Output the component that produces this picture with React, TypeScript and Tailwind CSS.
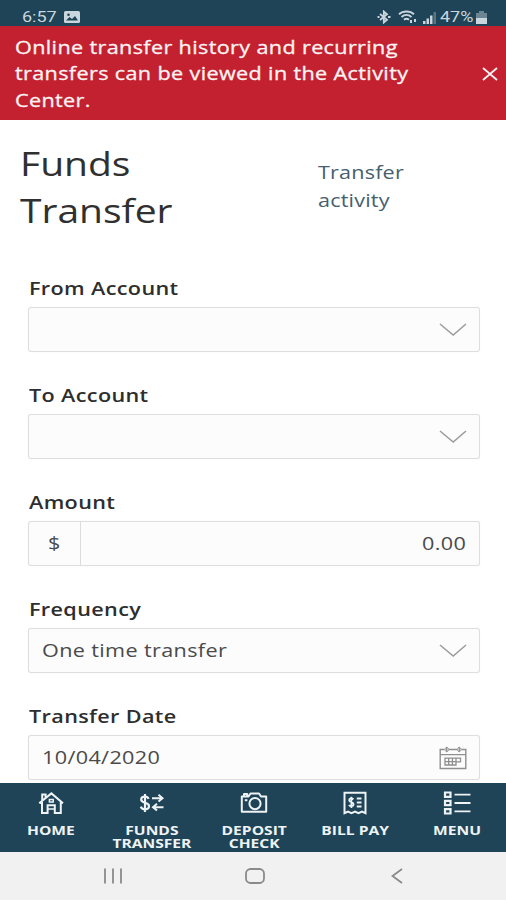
// Dependencies.
import type { ReactNode } from "react"

// Icons.
function Chevron() {
	return (
		<svg className="h-4 w-7" viewBox="0 0 28 16" fill="none" stroke="#9b9b9b" strokeWidth="1.5">
			<path d="M1 2 14.2 13 27 2" />
		</svg>
	)
}

function CalendarIcon() {
	return (
		<svg className="h-6 w-7" viewBox="0 0 28 24" fill="none" stroke="#8f8f8f" strokeWidth="1.4">
			<path d="M5.5 3.5H1.2V22.5H26.8V3.5H22.5M10 3.5H18M1.2 8.6H26.8" />
			<path d="M7.8 1.2V5.8M20.2 1.2V5.8" strokeWidth="1.4" />
			<path d="M7.8 1.2C5.4 2 5.4 5 7.8 5.8 10.2 5 10.2 2 7.8 1.2ZM20.2 1.2C17.8 2 17.8 5 20.2 5.8 22.6 5 22.6 2 20.2 1.2Z" strokeWidth="1" />
			<path d="M6 12.2H21.5V15.8H17V19H6ZM6 15.6H17M9.7 12.2V19M13.4 12.2V19M17 12.2V15.8" strokeWidth="1.3" />
		</svg>
	)
}

function HomeIcon() {
	return (
		<svg className="h-6 w-7" viewBox="0 0 28 24" fill="none" stroke="#eef3f5" strokeWidth="2">
			<path d="M2.2 12.2 14.4 2.4 26 12.2M5 11V22H10.6V14.2H17.8V22H23.8V11M5.2 9.5V3.4H8.6V6.5" />
			<path d="M12.4 8.6H16.2V11H12.4ZM10.6 18H17.8" strokeWidth="1.5" />
		</svg>
	)
}

function TransferIcon() {
	return (
		<svg className="h-6 w-7" viewBox="0 0 28 24" fill="none" stroke="#eef3f5" strokeWidth="2.2">
			<path d="M10.6 7.8C10 6.2 8.6 5.5 7 5.5 4.6 5.5 3.2 6.7 3.2 8.6 3.2 13 11 10.6 11 15 11 17 9.4 18.3 7 18.3 4.8 18.3 3.4 17.4 2.8 15.6M7 3V21" />
			<path d="M14 7.2H24.5M20.5 3.8 24.5 7.2 20.5 10.6M25.5 16.2H15M19 12.8 15 16.2 19 19.6" strokeWidth="2" />
		</svg>
	)
}

function CameraIcon() {
	return (
		<svg className="h-6 w-7" viewBox="0 0 28 24" fill="none" stroke="#eef3f5" strokeWidth="2" strokeLinejoin="round">
			<path d="M1.8 5.5H8.5L10.5 2.5H19L21 5.5H26.2V20.8H1.8ZM4 5V3H7.2V5" />
			<circle cx="15" cy="12.6" r="5.6" />
			<path d="M4.8 9.2H7.4" />
		</svg>
	)
}

function BillIcon() {
	return (
		<svg className="h-6 w-7" viewBox="0 0 28 24" fill="none" stroke="#eef3f5" strokeWidth="2">
			<path d="M3.5 22.2V1.7H24.5V22.2L21 20.5 17.5 22.2 14 20.5 10.5 22.2 7 20.5Z" />
			<path d="M12.5 8.3C10.5 6.6 8 7.4 8.2 9.3 8.4 11.5 12.6 10.8 12.6 13.2 12.6 15.4 9.6 15.8 7.8 14.2M10.4 5.8V17" strokeWidth="1.8" />
			<path d="M15.8 7.5H20.5M15.8 11.5H20.5M15.8 15.5H20.5" />
		</svg>
	)
}

function MenuIcon() {
	return (
		<svg className="h-6 w-7" viewBox="0 0 28 24" fill="none" stroke="#eef3f5" strokeWidth="2.2">
			<path d="M2 1.5H7.5V5.9H2ZM2 9.8H7.5V14.2H2ZM2 18.1H7.5V22.5H2Z" />
			<path d="M11.5 3.7H27.5M11.5 12H27.5M11.5 20.3H27.5" strokeWidth="1.8" />
		</svg>
	)
}

// Wide text, stretched from its left edge.
function Wide({ children }: { children: ReactNode }) {
	return <span className="inline-block origin-left scale-x-[1.2] whitespace-nowrap">{children}</span>
}

function Field({ label, children }: { label: string; children: ReactNode }) {
	return (
		<div className="h-[107px]">
			<div className="h-[33px] pl-[0.5px] text-[18px] leading-7 font-semibold text-[#2e2e2e]">
				<Wide>{label}</Wide>
			</div>
			<div className="flex h-[45px] items-center rounded-[3px] border-[1.5px] border-[#dedede] bg-[#fcfcfc] pr-3 text-[18px] text-[#4a4a4a] shadow-[0_0_1px_#e4e4e4]">
				{children}
			</div>
		</div>
	)
}

const tabs = [
	{ lines: ["HOME"], icon: <HomeIcon /> },
	{ lines: ["FUNDS", "TRANSFER"], icon: <TransferIcon /> },
	{ lines: ["DEPOSIT", "CHECK"], icon: <CameraIcon /> },
	{ lines: ["BILL PAY"], icon: <BillIcon /> },
	{ lines: ["MENU"], icon: <MenuIcon /> },
]

// Component.
export default function App() {
	return (
		<div className="flex h-[900px] w-[506px] flex-col overflow-hidden bg-white font-['Open_Sans',sans-serif] tracking-[0.3px]">
			<header className="flex h-[26px] shrink-0 items-center bg-[#1f4357] pt-2 pr-[19px] pl-[22px] font-[Roboto,sans-serif] text-[15px] tracking-normal text-[#c9d6dd]">
				<span className="w-[42px]">
					<Wide>6:57</Wide>
				</span>
				<svg className="h-3 w-4" viewBox="0 0 16 12">
					<rect width="16" height="12" rx="1.5" fill="#c9d6dd" />
					<path d="M2 9.5 5.5 6 8 8 11 5 14 9.5Z" fill="#1f4357" />
					<circle cx="4.5" cy="3.8" r="1.3" fill="#1f4357" />
				</svg>
				<svg className="ml-auto h-[14px] w-4" viewBox="0 0 16 14" fill="none" stroke="#c9d6dd" strokeWidth="1.8">
					<path d="M4 4 11 9.8 7.8 12.5V1.5L11 4.2 4 10" />
					<path d="M1.5 7H3.5M12 7H14.5" strokeWidth="2" />
				</svg>
				<svg className="ml-1.5 h-[14px] w-5" viewBox="0 0 20 14" fill="none" stroke="#c9d6dd" strokeWidth="1.9">
					<path d="M1 4.2C5 .6 12 .6 16 4.2M3.5 7C6.5 4.4 10.5 4.4 13.5 7M6 9.7C7.5 8.5 9.5 8.5 11 9.7" />
					<path d="M13 10V13M17 9V12" strokeWidth="2" />
				</svg>
				<svg className="ml-1 h-[13px] w-[14px]" viewBox="0 0 14 13" fill="#c9d6dd">
					<path d="M1 10H3.5V13H1ZM4.5 7.5H7V13H4.5Z" />
					<path d="M8 4.5H10.5V13H8Z" />
					<path d="M11.5 1H14V13H11.5Z" opacity=".35" />
				</svg>
				<span className="ml-1 w-[36px]">
					<Wide>47%</Wide>
				</span>
				<svg className="h-[13px] w-[11px]" viewBox="0 0 11 13" fill="#c9d6dd">
					<path d="M3 0H8V2H11V7H0V2H3Z" opacity=".45" />
					<path d="M0 7H11V13H0Z" />
				</svg>
			</header>

			<section className="flex h-[94px] shrink-0 items-center justify-between bg-[#c32030] pt-px pr-2 pl-[15px] text-[18px] leading-[26.5px] font-medium text-[#fff3f3] [-webkit-text-stroke:0.3px_#fff3f3]">
				<p className="flex flex-col">
					<Wide>Online transfer history and recurring</Wide>
					<Wide>transfers can be viewed in the Activity</Wide>
					<Wide>Center.</Wide>
				</p>
				<svg className="h-4 w-4" viewBox="0 0 16 16" stroke="#fff3f3" strokeWidth="1.8">
					<path d="M1 2 15 14M15 2 1 14" />
				</svg>
			</section>

			<main className="min-h-0 flex-1 overflow-hidden">
				<div className="flex h-[154px] pl-5">
					<h1 className="flex w-[298px] flex-col pt-5 text-[32.5px] leading-[47px] tracking-normal text-[#303030]">
						<Wide>Funds</Wide>
						<Wide>Transfer</Wide>
					</h1>
					<a className="flex flex-col pt-[38px] text-[18px] leading-7 tracking-[0.15px] text-[#466070]">
						<Wide>Transfer</Wide>
						<Wide>activity</Wide>
					</a>
				</div>
				<form className="pr-[26px] pl-7">
					<Field label="From Account">
						<span className="ml-auto"><Chevron /></span>
					</Field>
					<Field label="To Account">
						<span className="ml-auto"><Chevron /></span>
					</Field>
					<Field label="Amount">
						<span className="flex h-full w-[52px] items-center border-r border-[#dcdcdc] pl-[19px]"><Wide>$</Wide></span>
						<span className="ml-auto w-[45px]"><Wide>0.00</Wide></span>
					</Field>
					<Field label="Frequency">
						<span className="pl-[13px]"><Wide>One time transfer</Wide></span>
						<span className="ml-auto"><Chevron /></span>
					</Field>
					<Field label="Transfer Date">
						<span className="pl-[13px]"><Wide>10/04/2020</Wide></span>
						<span className="ml-auto"><CalendarIcon /></span>
					</Field>
				</form>
			</main>

			<nav className="flex h-[69px] shrink-0 bg-[#1f4357] pt-2 text-[13px] leading-[13px] font-bold tracking-normal text-[#eef3f5]">
				{tabs.map((tab) => (
					<div key={tab.lines[0]} className="flex w-[101.5px] shrink-0 flex-col items-center">
						{tab.icon}
						<span className="mt-[9px] flex scale-x-[1.2] flex-col items-center whitespace-nowrap">
							{tab.lines.map((line) => (
								<span key={line}>{line}</span>
							))}
						</span>
					</div>
				))}
			</nav>

			<footer className="flex h-12 shrink-0 items-center bg-[#f1f1f1] pl-[103px]">
				<svg className="h-5 w-5" viewBox="0 0 20 20" stroke="#8a8a8a" strokeWidth="1.8">
					<path d="M2 2.5V17.5M10 2.5V17.5M18 2.5V17.5" />
				</svg>
				<svg className="ml-[121px] h-5 w-[22px]" viewBox="0 0 22 20" fill="none" stroke="#8a8a8a" strokeWidth="1.8">
					<rect x="2" y="3" width="18" height="14" rx="4.5" />
				</svg>
				<svg className="ml-[125px] h-5 w-3" viewBox="0 0 12 20" fill="none" stroke="#8a8a8a" strokeWidth="1.8">
					<path d="M11 3 1.5 10 11 17" />
				</svg>
			</footer>
		</div>
	)
}
